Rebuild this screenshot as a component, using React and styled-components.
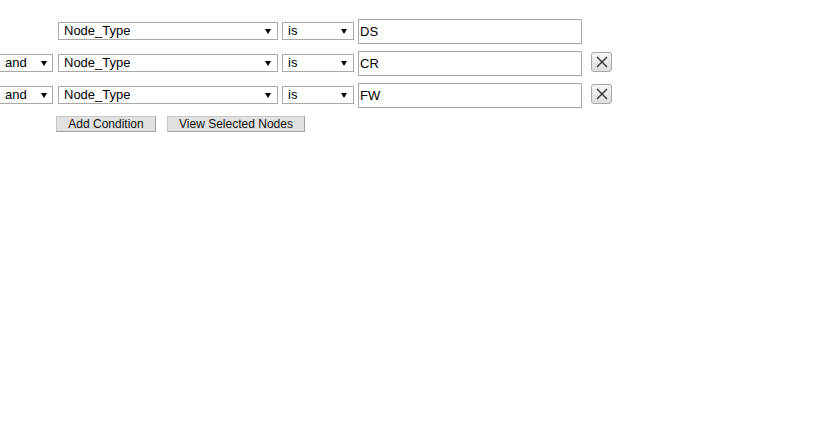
import React from "react";
import styled, { createGlobalStyle } from "styled-components";

const Global = createGlobalStyle`
  html, body { margin: 0; padding: 0; background: #fff; }
  body { font-family: "Liberation Sans", Arial, sans-serif; color: #000; }
`;

const Form = styled.div`
  padding-top: 19px;
  display: flex;
  flex-direction: column;
  gap: 7px;
`;

const Row = styled.div`
  display: grid;
  grid-template-columns: 54px 220px 72px 224px 26px;
  column-gap: 4px;
  align-items: start;
  height: 25px;
`;

const SelectBox = styled.div`
  position: relative;
  box-sizing: border-box;
  width: ${(p) => p.$w}px;
  height: 18px;
  margin-top: 3px;
  border: 1px solid #a9a9a9;
  background: #fff;
  font-size: 13px;
  line-height: 16px;
  padding-left: ${(p) => p.$pl ?? 5}px;
  color: #000;
  white-space: nowrap;
  justify-self: ${(p) => (p.$end ? "end" : "start")};
  margin-right: ${(p) => (p.$end ? 1 : 0)}px;
  &::after {
    content: "";
    position: absolute;
    right: ${(p) => p.$ar ?? 6}px;
    top: 6px;
    border-left: 3px solid transparent;
    border-right: 3px solid transparent;
    border-top: 5px solid #000;
  }
`;

const TextBox = styled.div`
  box-sizing: border-box;
  width: 224px;
  height: 25px;
  border: 1px solid #a9a9a9;
  padding-left: 1px;
  font-size: 13px;
  line-height: 23px;
  color: #000;
`;

const RemoveButton = styled.div`
  box-sizing: border-box;
  width: 21px;
  height: 20px;
  margin-left: 5px;
  margin-top: 1px;
  border: 1px solid #a6a6a6;
  border-radius: 3px;
  background: linear-gradient(#f6f6f6, #dcdcdc);
  display: flex;
  align-items: center;
  justify-content: center;
`;

const Actions = styled.div`
  display: flex;
  gap: 11px;
  padding-left: 56px;
  margin-top: 1px;
`;

const Button = styled.div`
  box-sizing: border-box;
  height: 16px;
  width: ${(p) => p.$w}px;
  border: 1px solid #a0a0a0;
  border-top-color: #c8c8c8;
  border-left-color: #c8c8c8;
  background: #e1e1e1;
  font-size: 12px;
  line-height: 14px;
  text-align: center;
  color: #111;
`;

const Cross = () => (
  <svg width="12" height="12" viewBox="0 0 12 12">
    <path d="M1 1 L11 11 M11 1 L1 11" stroke="#333" strokeWidth="1.4" fill="none" />
  </svg>
);

const rows = [
  { value: "DS", first: true },
  { value: "CR" },
  { value: "FW" },
];

export default function App() {
  return (
    <>
      <Global />
      <Form>
        {rows.map((r, i) => (
          <Row key={i}>
            {r.first ? <span /> : (
              <SelectBox $w={55} $end $pl={6} $ar={5}>and</SelectBox>
            )}
            <SelectBox $w={220}>Node_Type</SelectBox>
            <SelectBox $w={72}>is</SelectBox>
            <TextBox>{r.value}</TextBox>
            {r.first ? <span /> : <RemoveButton><Cross /></RemoveButton>}
          </Row>
        ))}
        <Actions>
          <Button $w={100}>Add Condition</Button>
          <Button $w={138}>View Selected Nodes</Button>
        </Actions>
      </Form>
    </>
  );
}
